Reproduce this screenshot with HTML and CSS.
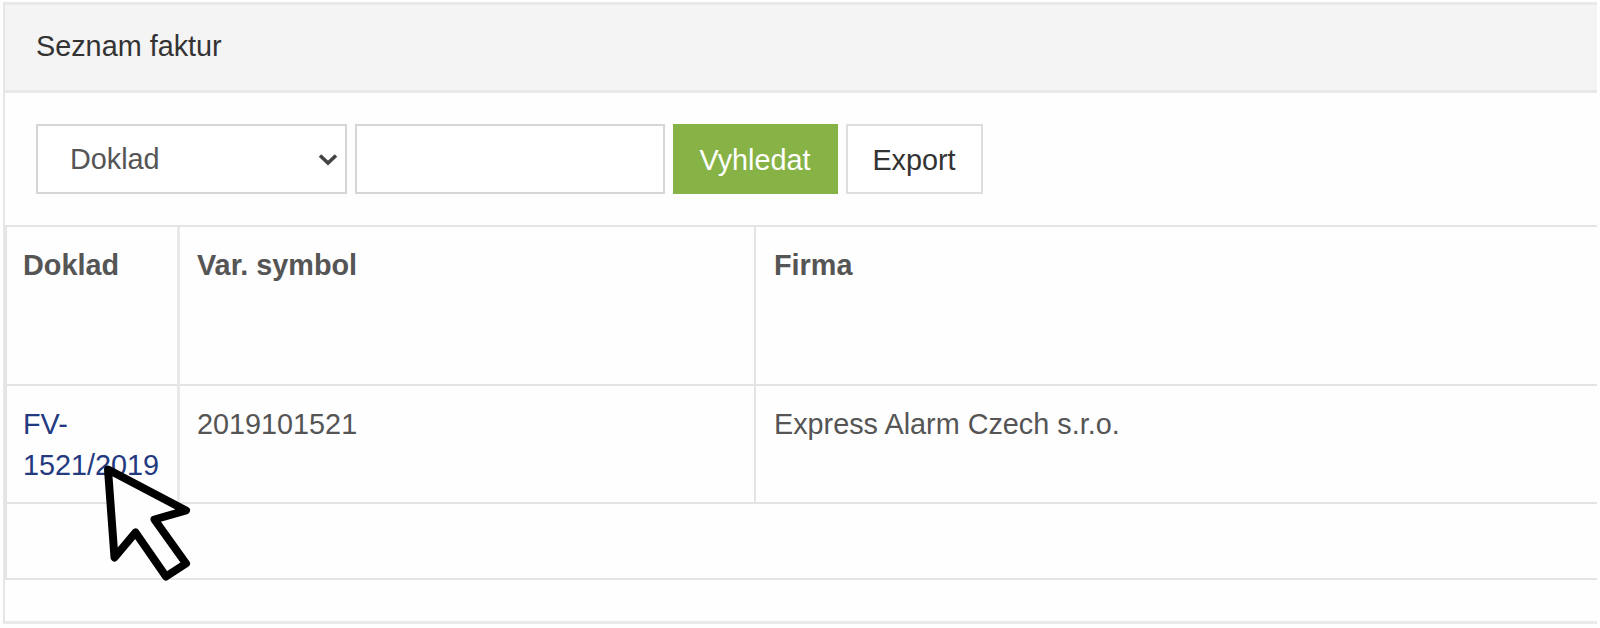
FILE: index.html
```html
<!DOCTYPE html>
<html lang="cs">
    <head>
        <meta charset="UTF-8">
        <title>Seznam faktur</title>
        <link rel="stylesheet" href="styles.css">
    </head>
    <body>
        <div class="panel">
            <div class="panel-heading">Seznam faktur</div>
            <form class="search-form">
                <div class="select-box">
                    <select class="form-control" name="column">
                        <option>Doklad</option>
                    </select>
                    <svg class="chevron" viewBox="0 0 20 14"><path d="M2 2.5 L10 10 L18 2.5"/></svg>
                </div>
                <input class="form-control" type="text" name="query">
                <button class="btn btn-search" type="button">Vyhledat</button>
                <button class="btn btn-export" type="button">Export</button>
            </form>
            <table class="invoices">
                <colgroup>
                    <col class="col-doc">
                    <col class="col-symbol">
                    <col>
                </colgroup>
                <thead>
                    <tr class="head-row">
                        <th>Doklad</th>
                        <th>Var. symbol</th>
                        <th>Firma</th>
                    </tr>
                </thead>
                <tbody>
                    <tr class="data-row">
                        <td><a class="doc-link" href="#">FV-<br>1521/2019</a></td>
                        <td>2019101521</td>
                        <td>Express Alarm Czech s.r.o.</td>
                    </tr>
                    <tr class="empty-row">
                        <td colspan="3"></td>
                    </tr>
                </tbody>
            </table>
        </div>
        <svg class="cursor" viewBox="0 0 90 120"><path d="M9 9.5 L87 50.5 L55.5 59.5 L87 103.5 L67 116.5 L36.5 72.5 L15.5 97.5 Z"/></svg>
    </body>
</html>
```

FILE: styles.css
```css
* {
    box-sizing: border-box;
}

body {
    margin: 0;
    height: 628px;
    overflow: hidden;
    background-color: #fefefe;
    color: #555;
    font-family: "Liberation Sans", Arial, sans-serif;
    font-size: 28.8px;
    line-height: 41px;
}

.panel {
    width: 1594px;
    height: 622px;
    margin: 2px 0 0 3px;
    border: 3px solid #e9e9e9;
    border-left: 2px solid #e6e6e6;
    border-right: none;
}

.panel-heading {
    height: 88px;
    padding: 21px 31px;
    background-color: #f4f4f4;
    border-bottom: 3px solid #e9e9e9;
    color: #333;
}

.search-form {
    display: flex;
    height: 132px;
    padding: 31px;
}

.select-box {
    position: relative;
    width: 311px;
    margin-right: 8px;
}

.form-control {
    width: 310px;
    height: 70px;
    padding: 1px 32px 0;
    border: 2px solid #d6d6d6;
    border-radius: 0;
    background-color: #fff;
    color: #555;
    font: inherit;
    appearance: none;
}

.select-box .form-control {
    width: 311px;
}

.chevron {
    position: absolute;
    right: 9px;
    top: 29px;
    width: 20px;
    height: 14px;
    fill: none;
    stroke: #444;
    stroke-width: 3.6;
}

.btn {
    height: 70px;
    padding: 2px 1px 0 0;
    margin-left: 8px;
    font: inherit;
}

.btn-search {
    width: 165px;
    border: none;
    background-color: #86b246;
    color: #fff;
}

.btn-export {
    width: 137px;
    border: 2px solid #dedede;
    background-color: #fff;
    color: #333;
}

.invoices {
    width: 100%;
    table-layout: fixed;
    border-spacing: 0;
    border-top: 2px solid #e4e4e4;
    border-left: 2px solid #e4e4e4;
}

.col-doc {
    width: 173px;
}

.col-symbol {
    width: 576px;
}

.invoices th,
.invoices td {
    padding: 18px 17px 0;
    border-bottom: 2px solid #e4e4e4;
    border-right: 2px solid #e4e4e4;
    text-align: left;
    vertical-align: top;
}

.invoices th:first-child,
.invoices td:first-child {
    padding-left: 16px;
    padding-right: 0;
    border-right: 3px solid #e9e9e9;
}

.invoices th:last-child,
.invoices td:last-child {
    padding-left: 18px;
    border-right: none;
}

.head-row {
    height: 159px;
}

.data-row {
    height: 118px;
}

.empty-row {
    height: 76px;
}

.doc-link {
    color: #233a80;
    text-decoration: none;
}

/* mouse pointer over the invoice link */
.cursor {
    position: absolute;
    left: 99px;
    top: 460px;
    width: 90px;
    height: 120px;
    overflow: visible;
    fill: #fefefe;
    stroke: #000;
    stroke-width: 8;
    stroke-linejoin: round;
}
```
